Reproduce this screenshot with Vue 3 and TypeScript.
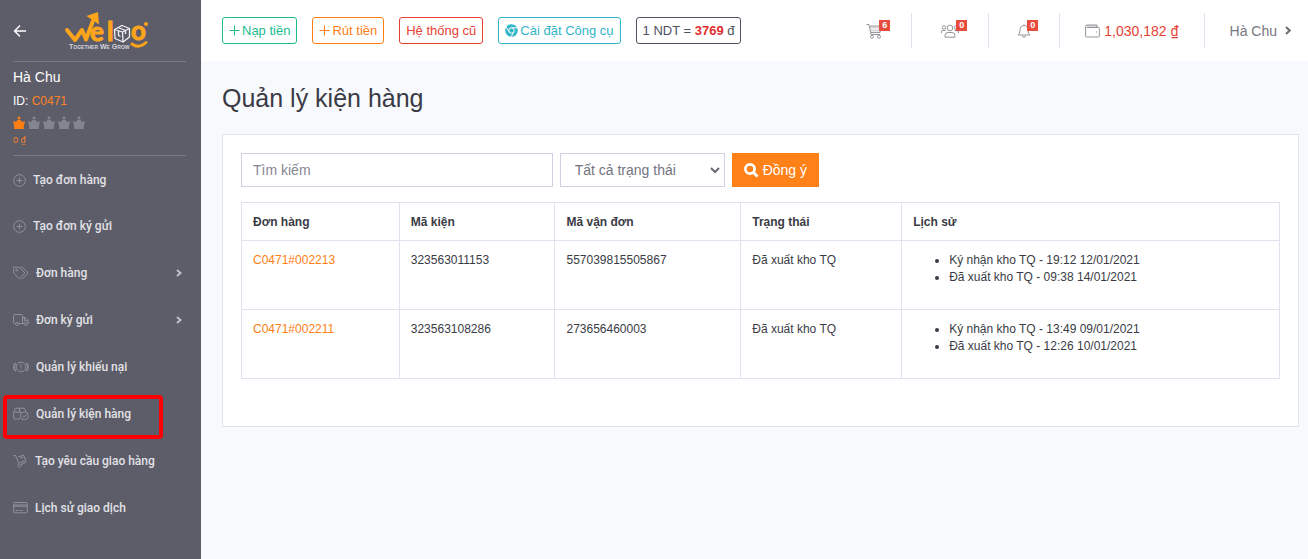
<script setup lang="ts">
import { ref } from 'vue'

type IconName = 'plus' | 'tags' | 'truck' | 'alert' | 'box' | 'trolley' | 'card'

interface NavItem {
  label: string
  icon: IconName
  expandable?: boolean
  marked?: boolean
}

interface Parcel {
  order: string
  code: string
  waybill: string
  status: string
  history: string[]
}

const navItems: NavItem[] = [
  { label: 'Tạo đơn hàng', icon: 'plus' },
  { label: 'Tạo đơn ký gửi', icon: 'plus' },
  { label: 'Đơn hàng', icon: 'tags', expandable: true },
  { label: 'Đơn ký gửi', icon: 'truck', expandable: true },
  { label: 'Quản lý khiếu nại', icon: 'alert' },
  { label: 'Quản lý kiện hàng', icon: 'box', marked: true },
  { label: 'Tạo yêu cầu giao hàng', icon: 'trolley' },
  { label: 'Lịch sử giao dịch', icon: 'card' },
]

const parcels: Parcel[] = [
  {
    order: 'C0471#002213',
    code: '323563011153',
    waybill: '557039815505867',
    status: 'Đã xuất kho TQ',
    history: ['Ký nhận kho TQ - 19:12 12/01/2021', 'Đã xuất kho TQ - 09:38 14/01/2021'],
  },
  {
    order: 'C0471#002211',
    code: '323563108286',
    waybill: '273656460003',
    status: 'Đã xuất kho TQ',
    history: ['Ký nhận kho TQ - 13:49 09/01/2021', 'Đã xuất kho TQ - 12:26 10/01/2021'],
  },
]

const keyword = ref('')
const status = ref('all')
</script>

<template>
  <div class="layout">
    <aside class="sidebar">
      <div class="brand">
        <button class="back" type="button" aria-label="Thu gọn">
          <svg width="14" height="14" viewBox="0 0 14 14"><path d="M13 7H1.5M7 1.5L1.5 7L7 12.5" /></svg>
        </button>
        <a class="logo" href="#" aria-label="Welog">
          <svg width="86" height="40" viewBox="0 0 86 40">
            <g fill="none" stroke="#fca51c" stroke-linejoin="round" stroke-linecap="round">
              <path stroke-width="4" d="M3 19L11 29L18 19L22 28.500L30 7" />
              <path stroke-width="3" d="M68 33Q75 38 82 31.500" />
            </g>
            <path fill="#fca51c" d="M22.500 5L34 1L35 13.500L31.500 11L27 8Z" />
            <circle cx="82" cy="13" r="2" fill="#fca51c" />
            <g fill="#fca51c" stroke="#fca51c" stroke-width="1">
              <text class="logo-letter" x="26" y="30">e</text>
              <text class="logo-letter" x="43" y="30">l</text>
              <text class="logo-letter" x="67" y="29">o</text>
            </g>
            <g fill="none" stroke="#f2f2f4" stroke-width="1.300" stroke-linejoin="round">
              <path d="M50.500 18.500L58 14.500L65.500 17.500V26L59 31L51 27.500Z" />
              <path d="M50.500 18.500L58.500 21L65.500 17.500M58.500 21L59 31M54 16.500L61.500 19.500V23M54.500 20V24.500L56.500 25.500" />
            </g>
            <text class="logo-tagline" x="5" y="38">Together We Grow</text>
          </svg>
        </a>
      </div>

      <div class="profile">
        <div class="profile-name">Hà Chu</div>
        <div class="profile-id">ID: <span>C0471</span></div>
        <div class="crowns">
          <svg v-for="n in 5" :key="n" :class="{ earned: n === 1 }" width="12" height="14" viewBox="0 0 12 14">
            <circle cx="6" cy="2" r="1.500" />
            <path d="M0 5L2.800 6L4.500 4H7.500L9.200 6L12 5L10.800 10.500V13H1.200V10.500Z" />
          </svg>
        </div>
        <div class="profile-balance">0 <span class="dong">₫</span></div>
      </div>

      <nav>
        <ul class="menu">
          <li v-for="item in navItems" :key="item.label" :class="['menu-item', item.icon]">
            <a href="#">
              <svg v-if="item.icon === 'plus'" width="13" height="13" viewBox="0 0 13 13">
                <circle cx="6.500" cy="6.500" r="5.800" /><path d="M6.500 3.500V9.500M3.500 6.500H9.500" />
              </svg>
              <svg v-else-if="item.icon === 'tags'" width="16" height="14" viewBox="0 0 16 14">
                <path d="M.700 1.200H6.200L12 7L6.500 12.800L.700 7ZM8 1.200H9.200L15.200 7L9.500 12.800L8.500 12" />
                <circle cx="3.700" cy="4.200" r="1" />
              </svg>
              <svg v-else-if="item.icon === 'truck'" width="16" height="14" viewBox="0 0 16 14">
                <path d="M2.500 10.500H1.600Q.600 10.500 .600 9.500V2.500Q.600 1.500 1.600 1.500H8.600Q9.600 1.500 9.600 2.500V10.500H5.500M9.600 4.500H12L15.400 7.700V10.500H14.200M9.600 10.500H11.200M11.500 4.800V7.700H15" />
                <circle cx="4" cy="10.900" r="1.500" /><circle cx="12.700" cy="10.900" r="1.500" />
              </svg>
              <svg v-else-if="item.icon === 'alert'" width="16" height="14" viewBox="0 0 16 14">
                <circle cx="8" cy="7" r="4.800" />
                <path d="M8 4V7.700M8 8.900V9.900M2.700 2.500Q.200 7 2.700 11.500M13.300 2.500Q15.800 7 13.300 11.500M1.200 3.500Q0 7 1.200 10.500M14.800 3.500Q16 7 14.800 10.500" />
              </svg>
              <svg v-else-if="item.icon === 'box'" width="16" height="14" viewBox="0 0 16 14">
                <path d="M7 12H1.500Q.600 12 .600 11V5.500L2.300 1.200H11.200L13 4.500M.600 5.200H8.500M6.500 1.200V5" />
                <circle cx="11.300" cy="8.800" r="4" /><path d="M9.500 8.900L10.900 10.200L13.300 7.700" />
              </svg>
              <svg v-else-if="item.icon === 'trolley'" width="15" height="14" viewBox="0 0 15 14">
                <path d="M.500 1.500H2.500L6.200 10M8 10.500L13.500 8M5.200 3L10.500 1L12.800 6.500L7.200 8.500M7.800 2L8.500 4.200L10.200 3.500" />
                <circle cx="6.500" cy="11.500" r="1.600" />
              </svg>
              <svg v-else width="15" height="14" viewBox="0 0 15 14">
                <path d="M1.500 1.500H13.500Q14.300 1.500 14.300 2.300V11Q14.300 11.800 13.500 11.800H1.500Q.700 11.800 .700 11V2.300Q.700 1.500 1.500 1.500ZM.700 4H14.300M.700 5.200H14.300M2.500 9.500H5.500M7 9.500H9.500" />
              </svg>
              <span>{{ item.label }}</span>
              <svg v-if="item.expandable" class="caret" width="6" height="8" viewBox="0 0 6 8"><path d="M1 1L4.500 4L1 7" /></svg>
            </a>
            <div v-if="item.marked" class="marker"></div>
          </li>
        </ul>
      </nav>
    </aside>

    <div class="page">
      <header class="topbar">
        <div class="actions">
          <button class="action green" type="button">
            <svg width="11" height="11" viewBox="0 0 11 11"><path d="M5.500 .500V10.500M.500 5.500H10.500" /></svg>
            <span>Nạp tiền</span>
          </button>
          <button class="action orange" type="button">
            <svg width="11" height="11" viewBox="0 0 11 11"><path d="M5.500 .500V10.500M.500 5.500H10.500" /></svg>
            <span>Rút tiền</span>
          </button>
          <button class="action red" type="button">Hệ thống cũ</button>
          <button class="action teal" type="button">
            <svg class="chrome" width="13" height="13" viewBox="0 0 13 13">
              <circle class="disc" cx="6.500" cy="6.500" r="6.300" />
              <circle class="ring" cx="6.500" cy="6.500" r="2.700" />
              <path d="M6.500 3.800H12.300M4.200 7.900L1.300 3.200M8.800 7.900L6.100 12.800" />
            </svg>
            <span>Cài đặt Công cụ</span>
          </button>
          <div class="action rate"><span>1 NDT = <b>3769</b> đ</span></div>
        </div>
        <div class="tools">
          <a class="tool cart" href="#" aria-label="Giỏ hàng">
            <svg width="17" height="16" viewBox="0 0 17 16">
              <path class="soft" d="M4 4.500H15M4.500 7.500H14" />
              <path d="M.500 1.500H3L5 11.500H14M4 3H15.500L14 9.500H5" />
              <circle cx="6" cy="13.700" r="1.500" /><circle cx="13" cy="13.700" r="1.500" />
            </svg>
            <span class="badge">6</span>
          </a>
          <a class="tool people" href="#" aria-label="Khách hàng">
            <svg width="18" height="14" viewBox="0 0 18 14">
              <circle cx="9" cy="4" r="2.800" /><circle cx="3" cy="3.500" r="1.700" /><circle cx="15" cy="3.500" r="1.700" />
              <path d="M4 13.200V11.500Q4 8.500 7 8.500H11Q14 8.500 14 11.500V13.200ZM.500 9V8Q.500 6.500 2 6.500H4.500M17.500 9V8Q17.500 6.500 16 6.500H13.500" />
            </svg>
            <span class="badge">0</span>
          </a>
          <a class="tool bell" href="#" aria-label="Thông báo">
            <svg width="14" height="14" viewBox="0 0 14 14">
              <path d="M7 .300V1.500M1 11H13Q11 9.500 11 6.500Q11 1.500 7 1.500Q3 1.500 3 6.500Q3 9.500 1 11ZM5.300 11.500Q5.500 13.300 7 13.300Q8.500 13.300 8.700 11.500" />
            </svg>
            <span class="badge">0</span>
          </a>
          <a class="tool wallet" href="#">
            <svg width="15" height="14" viewBox="0 0 15 14">
              <path class="soft" d="M2 2H12M2 3H13" />
              <path d="M1.500 3.500H13.500Q14.400 3.500 14.400 4.400V12Q14.400 13 13.500 13H1.500Q.600 13 .600 12V2.500Q.600 1 1.800 1H12V3.500M11 8H12" />
            </svg>
            <span>1,030,182 <span class="dong">₫</span></span>
          </a>
          <a class="tool user" href="#">
            <span>Hà Chu</span>
            <svg width="6" height="9" viewBox="0 0 6 9"><path d="M1 1L4.700 4.500L1 8" /></svg>
          </a>
        </div>
      </header>

      <main class="content">
        <h1>Quản lý kiện hàng</h1>
        <section class="panel">
          <form class="filters" @submit.prevent>
            <input v-model="keyword" type="text" placeholder="Tìm kiếm" aria-label="Tìm kiếm" />
            <div class="select-box">
              <select v-model="status" aria-label="Trạng thái">
                <option value="all">Tất cả trạng thái</option>
              </select>
              <svg width="10" height="7" viewBox="0 0 10 7"><path d="M1 1L5 5L9 1" /></svg>
            </div>
            <button class="submit" type="submit">
              <svg width="15" height="15" viewBox="0 0 14 14"><circle cx="5.600" cy="5.600" r="4.300" /><path d="M9 9L12.700 12.700" /></svg>
              Đồng ý
            </button>
          </form>
          <table>
            <colgroup>
              <col class="w-order" /><col class="w-code" /><col class="w-waybill" /><col class="w-status" /><col />
            </colgroup>
            <thead>
              <tr>
                <th>Đơn hàng</th>
                <th>Mã kiện</th>
                <th>Mã vận đơn</th>
                <th>Trạng thái</th>
                <th>Lịch sử</th>
              </tr>
            </thead>
            <tbody>
              <tr v-for="parcel in parcels" :key="parcel.order">
                <td><a href="#">{{ parcel.order }}</a></td>
                <td>{{ parcel.code }}</td>
                <td>{{ parcel.waybill }}</td>
                <td>{{ parcel.status }}</td>
                <td>
                  <ul>
                    <li v-for="entry in parcel.history" :key="entry">{{ entry }}</li>
                  </ul>
                </td>
              </tr>
            </tbody>
          </table>
        </section>
      </main>
    </div>
  </div>
</template>

<style>
body {
  margin: 0;
  background: #f8f9fd;
}
</style>

<style scoped>
.layout {
  display: flex;
  min-height: 100vh;
  font-family: "Liberation Sans", Arial, sans-serif;
  font-size: 12px;
  color: #3a3b45;
  background: #f8f9fd;
}
* {
  box-sizing: border-box;
}
a {
  color: inherit;
  text-decoration: none;
}
button,
input,
select {
  font-family: inherit;
}
svg {
  flex: none;
  fill: none;
}
.dong {
  font-family: Roboto, sans-serif;
}

/* Sidebar */
.sidebar {
  flex: 0 0 201px;
  background: #5c5d69;
  color: #fff;
}
.brand {
  display: flex;
  align-items: center;
  gap: 37px;
  height: 62px;
  margin: 0 15px 0 13px;
  border-bottom: 1px solid #787984;
}
.back {
  display: flex;
  padding: 0;
  border: 0;
  background: none;
}
.back svg {
  stroke: #fff;
  stroke-width: 1.4;
}
.logo {
  display: flex;
}
.logo-letter {
  font: bold 26px Lato, sans-serif;
}
.logo-tagline {
  font: small-caps bold 7px "Liberation Sans", sans-serif;
  fill: #d5d5da;
}
.profile {
  height: 94px;
  margin: 0 15px 0 13px;
  padding-top: 5px;
  border-bottom: 1px solid #787984;
}
.profile-name {
  font-size: 14px;
  line-height: 20px;
}
.profile-id {
  margin-top: 5px;
  line-height: 18px;
}
.profile-id span,
.profile-balance {
  color: #fd8226;
}
.crowns {
  display: flex;
  gap: 3px;
  margin-top: 6px;
}
.crowns svg {
  fill: #84858f;
}
.crowns .earned {
  fill: #fd7e14;
}
.profile-balance {
  margin-top: 4px;
  font-size: 9px;
  line-height: 12px;
}
.menu {
  margin: 0;
  padding: 1px 0 0;
  list-style: none;
}
.menu-item {
  position: relative;
  height: 47px;
}
.menu-item.plus {
  height: 46px;
}
.menu-item a {
  display: flex;
  align-items: center;
  gap: 7px;
  height: 100%;
  padding: 0 19px 0 13px;
  font: 500 12px Roboto, sans-serif;
  color: #e2e2e6;
}
.menu-item svg {
  stroke: #8f909a;
}
.menu-item .caret {
  margin-left: auto;
  stroke: #c0c0c7;
  stroke-width: 2;
}
.marker {
  position: absolute;
  inset: 5px 38px -2px 3px;
  border: 4px solid #f00;
  border-radius: 4px;
}

/* Top bar */
.page {
  flex: 1;
  min-width: 0;
}
.topbar {
  display: flex;
  justify-content: space-between;
  align-items: center;
  height: 61px;
  padding-left: 21px;
  background: #fff;
}
.actions {
  display: flex;
  gap: 15px;
}
.action {
  display: flex;
  align-items: center;
  gap: 2px;
  height: 27px;
  padding: 0 6px;
  border: 1px solid currentColor;
  border-radius: 3px;
  background: #fff;
  font-size: 13px;
  white-space: nowrap;
}
.action svg {
  stroke: currentColor;
}
.green {
  color: #1cbb8c;
}
.orange {
  color: #fd7e14;
}
.red {
  color: #e63f33;
}
.teal {
  color: #33b5c8;
}
.chrome .disc {
  fill: #33b5c8;
  stroke: none;
}
.chrome .ring,
.chrome path {
  stroke: #fff;
}
.rate {
  color: #50515e;
}
.rate b {
  color: #e02f2f;
}
.tools {
  display: flex;
}
.tool {
  display: flex;
  align-items: center;
  height: 35px;
  padding: 0 21px 0 29px;
  border-right: 1px solid #e2e2ee;
  font-size: 14px;
  color: #777780;
}
.tool svg {
  stroke: #96969c;
}
.tool .soft {
  stroke: #d8d8dc;
  stroke-width: 2;
}
.tool.bell {
  padding-left: 28px;
}
.tool.wallet {
  gap: 4px;
  padding: 0 25px;
  color: #e63f33;
}
.tool.user {
  gap: 8px;
  padding: 0 17px 0 25px;
  border: 0;
}
.tool.user svg {
  stroke: #6c6c74;
  stroke-width: 2;
}
.badge {
  width: 11px;
  height: 11px;
  margin: -11px 0 0 -4px;
  background: #e74c3c;
  color: #fff;
  font-size: 9px;
  font-weight: bold;
  line-height: 11px;
  text-align: center;
  z-index: 1;
}
.people .badge {
  margin-left: -3px;
}

/* Content */
.content {
  padding: 20px 9px 20px 21px;
}
h1 {
  margin: 0 0 18px;
  font-size: 25px;
  font-weight: 400;
  line-height: 35px;
}
.panel {
  padding: 18px 18px 47px;
  border: 1px solid #e2e2ee;
  background: #fff;
}
.filters {
  display: flex;
  gap: 7px;
  margin-bottom: 15px;
}
.filters input {
  width: 30%;
  height: 34px;
  padding: 0 11px;
  border: 1px solid #d0d0e0;
  font-size: 14px;
}
.filters input::placeholder {
  color: #868794;
}
.select-box {
  display: grid;
  align-items: center;
}
.select-box select,
.select-box svg {
  grid-area: 1 / 1;
}
.select-box select {
  width: 165px;
  height: 34px;
  padding: 0 14px;
  border: 1px solid #d0d0e0;
  border-radius: 0;
  appearance: none;
  background: #fff;
  font-size: 14px;
  color: #737480;
}
.select-box svg {
  justify-self: end;
  margin-right: 5px;
  stroke: #6a6b74;
  stroke-width: 2;
  pointer-events: none;
}
.submit {
  display: flex;
  align-items: center;
  gap: 4px;
  height: 34px;
  padding: 0 12px;
  border: 0;
  background: #ff8118;
  font-size: 14px;
  color: #fff;
}
.submit svg {
  stroke: #fff;
  stroke-width: 2.6;
}
table {
  width: 100%;
  table-layout: fixed;
  border-collapse: collapse;
  line-height: 17px;
}
.w-order {
  width: 15.2%;
}
.w-code {
  width: 15%;
}
.w-waybill {
  width: 17.9%;
}
.w-status {
  width: 15.5%;
}
th,
td {
  padding: 11px 11px 9px;
  border: 1px solid #e2e2ee;
  text-align: left;
  vertical-align: top;
}
td a {
  color: #fd7e14;
}
td ul {
  margin: 0 0 14px;
  padding-left: 36px;
}
</style>
